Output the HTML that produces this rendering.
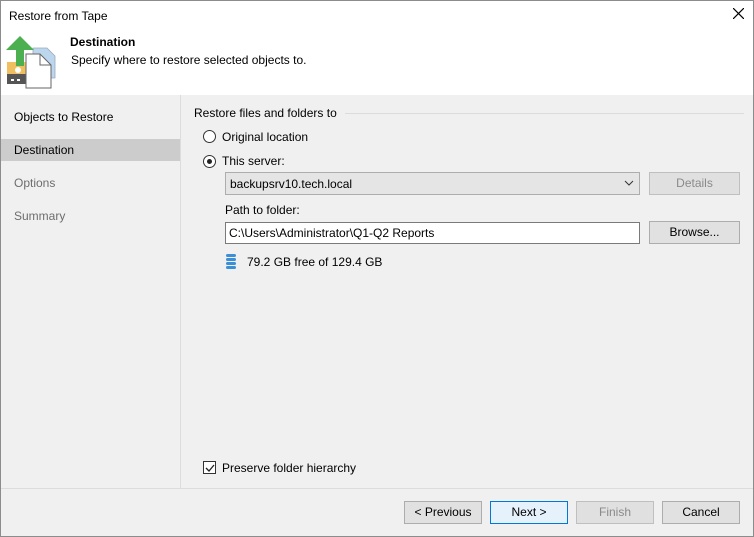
<!DOCTYPE html><html><head><style>
*{margin:0;padding:0;box-sizing:border-box}
body{width:754px;height:537px;position:relative;background:#f0f0f0;font-family:"Liberation Sans",sans-serif;font-size:12px;color:#000;overflow:hidden}
.a{position:absolute}
.btn{position:absolute;height:23px;border:1px solid #adadad;background:#e1e1e1;text-align:center;line-height:21px}
</style></head><body>
<div class="a" style="left:0;top:0;width:754px;height:537px;border:1px solid #8c8c8c"></div>
<div class="a" style="left:1px;top:1px;width:752px;height:94px;background:#fff"></div>
<div class="a" style="left:9px;top:9px">Restore from Tape</div>
<svg class="a" style="left:733px;top:8px" width="11" height="11"><path d="M0 0L11 11M11 0L0 11" stroke="#000" stroke-width="1.2"/></svg>
<svg class="a" style="left:0;top:30px" width="64" height="64">
<rect x="7" y="32" width="20" height="14" fill="#f0c060"/><rect x="7" y="44" width="20" height="10" fill="#555"/><circle cx="18" cy="40" r="3" fill="#fff"/>
<rect x="11" y="49" width="3" height="2" fill="#fff"/><rect x="17" y="49" width="3" height="2" fill="#fff"/>
<path d="M33 18 H47 L55 26 V48 H33Z" fill="#bcd6ee" stroke="#9ab" stroke-width="0.8"/>
<path d="M26 24 H40 L51 35 V58 H26Z" fill="#fff" stroke="#666"/>
<path d="M40 24 V35 H51" fill="none" stroke="#666"/>
<path d="M6 20 L20 6 L34 20 H24 V36 H16 V20Z" fill="#4caf50"/>
</svg>
<div class="a" style="left:70px;top:35px;font-weight:bold">Destination</div>
<div class="a" style="left:71px;top:53px">Specify where to restore selected objects to.</div>
<div class="a" style="left:180px;top:95px;width:1px;height:393px;background:#dcdcdc"></div>
<div class="a" style="left:14px;top:110px">Objects to Restore</div>
<div class="a" style="left:1px;top:139px;width:179px;height:22px;background:#cccccc"></div>
<div class="a" style="left:14px;top:143px">Destination</div>
<div class="a" style="left:14px;top:176px;color:#6d6d6d">Options</div>
<div class="a" style="left:14px;top:209px;color:#6d6d6d">Summary</div>
<div class="a" style="left:194px;top:106px">Restore files and folders to</div>
<div class="a" style="left:345px;top:113px;width:399px;height:1px;background:#dcdcdc"></div>
<div class="a" style="left:203px;top:130px;width:13px;height:13px;border:1px solid #333;border-radius:50%;background:#fff"></div>
<div class="a" style="left:222px;top:130px">Original location</div>
<div class="a" style="left:203px;top:155px;width:13px;height:13px;border:1px solid #333;border-radius:50%;background:#fff"><div class="a" style="left:3px;top:3px;width:5px;height:5px;border-radius:50%;background:#222"></div></div>
<div class="a" style="left:222px;top:154px">This server:</div>
<div class="a" style="left:225px;top:172px;width:415px;height:23px;border:1px solid #adadad;background:#e5e5e5"></div>
<div class="a" style="left:230px;top:177px">backupsrv10.tech.local</div>
<svg class="a" style="left:624px;top:180px" width="10" height="6"><path d="M1 1L5 5L9 1" fill="none" stroke="#333"/></svg>
<div class="btn" style="left:649px;top:172px;width:91px;color:#8a8a8a;border-color:#bfbfbf;background:#e0e0e0">Details</div>
<div class="a" style="left:225px;top:203px">Path to folder:</div>
<div class="a" style="left:225px;top:222px;width:415px;height:22px;border:1px solid #7a7a7a;background:#fff"></div>
<div class="a" style="left:229px;top:226px">C:\Users\Administrator\Q1-Q2 Reports</div>
<div class="btn" style="left:649px;top:221px;width:91px">Browse...</div>
<svg class="a" style="left:225px;top:253px" width="12" height="17"><g fill="#3c8fd6"><rect x="1" y="1" width="10" height="3" rx="1.5"/><rect x="1" y="5" width="10" height="3" rx="1.5"/><rect x="1" y="9" width="10" height="3" rx="1.5"/><rect x="1" y="13" width="10" height="3" rx="1.5"/></g></svg>
<div class="a" style="left:247px;top:255px">79.2 GB free of 129.4 GB</div>
<div class="a" style="left:203px;top:461px;width:13px;height:13px;border:1px solid #333;background:#fff"><svg class="a" style="left:1px;top:1px" width="10" height="10"><path d="M1 5L4 8L9 2" fill="none" stroke="#222" stroke-width="1.3"/></svg></div>
<div class="a" style="left:222px;top:461px">Preserve folder hierarchy</div>
<div class="a" style="left:1px;top:488px;width:752px;height:1px;background:#dcdcdc"></div>
<div class="btn" style="left:404px;top:501px;width:78px">&lt; Previous</div>
<div class="btn" style="left:490px;top:501px;width:78px;border-color:#0078d7;background:#e5f1fb">Next &gt;</div>
<div class="btn" style="left:576px;top:501px;width:78px;color:#8a8a8a;border-color:#bfbfbf;background:#e0e0e0">Finish</div>
<div class="btn" style="left:662px;top:501px;width:78px">Cancel</div>
</body></html>
